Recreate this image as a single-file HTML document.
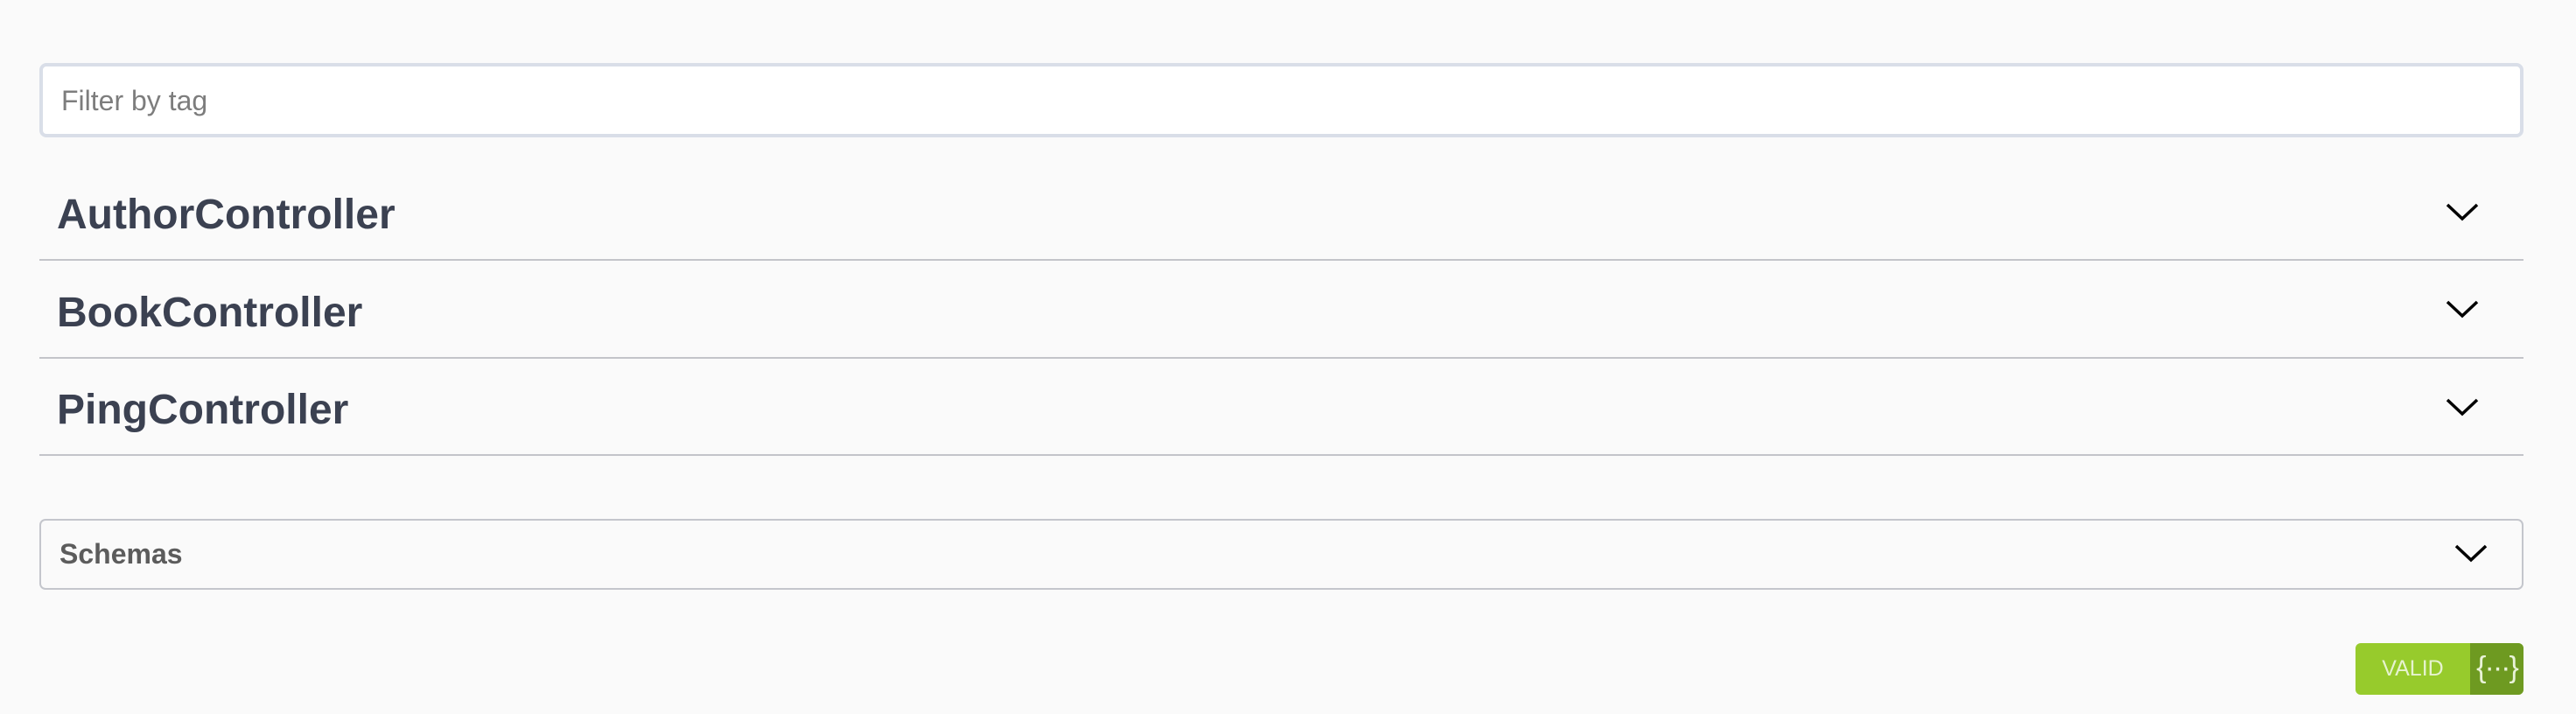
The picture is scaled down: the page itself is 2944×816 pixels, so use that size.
<!DOCTYPE html>
<html><head><meta charset="utf-8"><style>
body{margin:0;background:#fafafa;width:2944px;height:816px;position:relative;overflow:hidden;font-family:"Liberation Sans",sans-serif}
.inp{position:absolute;left:45px;top:72px;width:2839px;height:85px;box-sizing:border-box;border:4px solid #d9dee8;border-radius:8px;background:#fff}
.inp span{position:absolute;left:21px;top:23px;font-size:32px;color:#7d7d7d;line-height:32px}
.tag{position:absolute;left:45px;width:2839px;height:2px;background:#c3c4c9}
.t{position:absolute;left:65px;font-size:48px;font-weight:bold;color:#3b4151;line-height:48px}
.chev{position:absolute}
.sch{position:absolute;left:45px;top:593px;width:2839px;height:81px;box-sizing:border-box;border:2px solid #c4c6cc;border-radius:7px}
.sch span{position:absolute;left:21px;top:22px;font-size:32px;font-weight:bold;color:#5c5c5c;line-height:32px}
.badge{position:absolute;left:2692px;top:735px;width:192px;height:59px;border-radius:6px;overflow:hidden;background:#97cb2c}
.badge .v{position:absolute;left:0;top:0;width:131px;height:59px;text-align:center;line-height:59px;color:#e6f3cf;font-size:25px}
.badge .d{position:absolute;left:131px;top:0;width:61px;height:59px;background:#6e9a21;color:#e9f3d8;text-align:center;line-height:56px;font-size:34px;letter-spacing:-2px}
</style></head><body>
<div class="inp"><span>Filter by tag</span></div>

<div class="t" style="top:222px">AuthorController</div>
<svg class="chev" style="left:2795px;top:231px" width="38" height="24" viewBox="0 0 38 24"><path d="M2 3 L19 19 L36 3" fill="none" stroke="#000" stroke-width="3.5"/></svg>
<div class="tag" style="top:296px"></div>

<div class="t" style="top:334px">BookController</div>
<svg class="chev" style="left:2795px;top:342px" width="38" height="24" viewBox="0 0 38 24"><path d="M2 3 L19 19 L36 3" fill="none" stroke="#000" stroke-width="3.5"/></svg>
<div class="tag" style="top:408px"></div>

<div class="t" style="top:445px">PingController</div>
<svg class="chev" style="left:2795px;top:454px" width="38" height="24" viewBox="0 0 38 24"><path d="M2 3 L19 19 L36 3" fill="none" stroke="#000" stroke-width="3.5"/></svg>
<div class="tag" style="top:519px"></div>

<div class="sch"><span>Schemas</span></div>
<svg class="chev" style="left:2805px;top:621px" width="38" height="24" viewBox="0 0 38 24"><path d="M2 3 L19 19 L36 3" fill="none" stroke="#000" stroke-width="3.5"/></svg>

<div class="badge"><div class="v">VALID</div><div class="d">{···}</div></div>
</body></html>
